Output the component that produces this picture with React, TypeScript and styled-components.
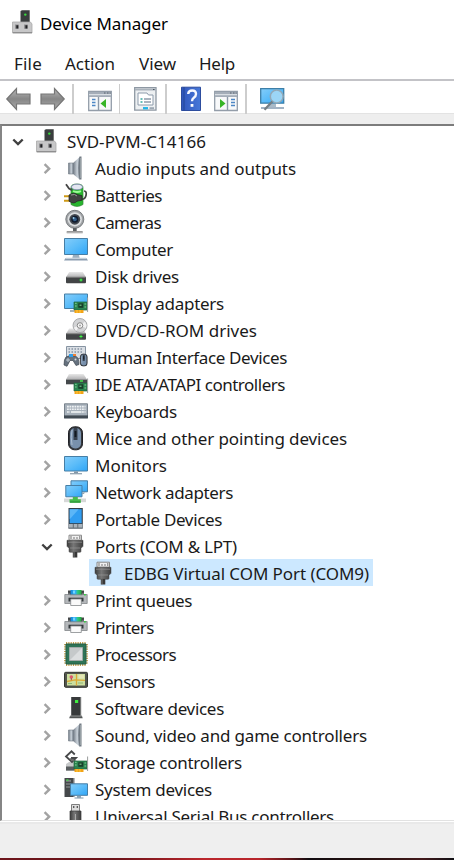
import React, { useLayoutEffect, useRef, useState } from "react";
import styled, { createGlobalStyle } from "styled-components";

const GlobalStyle = createGlobalStyle`
  * { box-sizing: border-box; }
  body { margin: 0; background: #fff; overflow: hidden; }
`;

const Window = styled.div`
  width: 454px;
  height: 860px;
  display: flex;
  flex-direction: column;
  overflow: hidden;
  background: #fff;
  color: #1a1a1a;
  font-family: "Noto Sans", "Open Sans", sans-serif;
  font-size: 17px;
`;

const TitleBar = styled.header`
  height: 45px;
  display: flex;
  align-items: flex-start;
  padding: 10px 0 0 10px;
  gap: 6px;
  color: #000;
`;

const MenuBar = styled.nav`
  height: 34px;
  display: flex;
  padding: 5px 0 0 14px;
`;

const MenuItem = styled.div<{ $w: number }>`
  width: ${(p) => p.$w}px;
`;

const Toolbar = styled.div`
  height: 35px;
  flex: none;
  display: flex;
  align-items: flex-start;
  padding: 6px 0 0 6px;
  border-top: 2px solid #c3c3c7;
  border-bottom: 1px solid #e3e3e3;
`;

const ToolButton = styled.div<{ $gap: number }>`
  width: 24px;
  height: 24px;
  margin-left: ${(p) => p.$gap}px;
`;

const Separator = styled.div<{ $gap: number }>`
  width: 1.5px;
  height: 30px;
  margin: -3px 0 0 ${(p) => p.$gap}px;
  background: #cdcdcd;
`;

const Band = styled.div`
  height: 10px;
  flex: none;
  background: #eee;
`;

const Tree = styled.main`
  height: 697px;
  flex: none;
  overflow: hidden;
  padding-top: 1px;
  border-top: 2px solid #7c7c7c;
  border-left: 2px solid #858585;
  border-bottom: 1px solid #e2e2e2;
`;

const Row = styled.div<{ $level: number }>`
  height: 27px;
  display: flex;
  padding-left: ${(p) => [7, 36, 87][p.$level]}px;
`;

const Content = styled.div<{ $selected?: boolean; $level: number }>`
  height: 27px;
  display: flex;
  gap: ${(p) => [9, 7, 8][p.$level]}px;
  padding: 0 ${(p) => (p.$selected ? 4 : 0)}px 0 ${(p) => (p.$selected ? 3 : 0)}px;
  background: ${(p) => (p.$selected ? "#cce8ff" : "transparent")};
`;

const Twisty = styled.svg<{ $level: number }>`
  width: 18px;
  height: 27px;
  margin-right: ${(p) => (p.$level ? 8 : 7)}px;
  fill: none;
`;

const Icon = styled.svg`
  display: block;
  flex: none;
  width: 24px;
  height: 24px;
  overflow: visible;
`;

const IconSlot = styled.div`
  padding-top: 2px;
  height: 27px;
`;

const Text = styled.span`
  display: block;
  white-space: pre;
  line-height: 27px;
  height: 27px;
`;

const RowText = styled.div`
  padding-top: 1px;
`;

const Status = styled.footer`
  height: 37px;
  flex: none;
  background: #efefef;
  border-top: 1px solid #fff;
  box-shadow: inset 0 2px #e9e9e9;
`;

const Desktop = styled.div`
  height: 2px;
  flex: none;
  background: linear-gradient(90deg, #6d151b, #6a1218 25%, #bb262c 45%, #b8252b 57%, #5d1519 64%, #120c10 68%, #24100f 80%, #43191b 93%, #111015);
`;

function Label({ text, width }: { text: string; width: number }) {
  const ref = useRef<HTMLSpanElement>(null);
  const [spacing, setSpacing] = useState(0);
  useLayoutEffect(() => {
    const range = document.createRange();
    range.selectNodeContents(ref.current!);
    const natural = range.getBoundingClientRect().width - spacing * text.length;
    setSpacing((width - natural) / text.length);
  }, [text, width]);
  return (
    <Text ref={ref} style={{ letterSpacing: `${spacing}px` }}>
      {text}
    </Text>
  );
}

const Defs = () => (
  <svg width="0" height="0" style={{ position: "absolute" }}>
    <defs>
      <linearGradient id="screen" x1="0" y1="0" x2="1" y2="1">
        <stop offset="0" stopColor="#84cdfa" />
        <stop offset=".5" stopColor="#5bbcf9" />
        <stop offset="1" stopColor="#2fa5f7" />
      </linearGradient>
      <linearGradient id="steel" x1="0" x2="1">
        <stop offset="0" stopColor="#6d7681" />
        <stop offset=".6" stopColor="#c9d1d9" />
        <stop offset="1" stopColor="#929ca7" />
      </linearGradient>
      <linearGradient id="silver" x1="0" y1="0" x2="0" y2="1">
        <stop offset="0" stopColor="#e8e8e8" />
        <stop offset="1" stopColor="#b0b0b2" />
      </linearGradient>
      <linearGradient id="dark" x1="0" y1="0" x2="1" y2="0">
        <stop offset="0" stopColor="#3c3c3c" />
        <stop offset=".4" stopColor="#777" />
        <stop offset="1" stopColor="#3d3d3d" />
      </linearGradient>
      <linearGradient id="arrow" x1="0" y1="0" x2="0" y2="1">
        <stop offset="0" stopColor="#b8b8b8" />
        <stop offset=".5" stopColor="#868686" />
        <stop offset="1" stopColor="#adadad" />
      </linearGradient>
      <linearGradient id="help" x1="0" x2="1">
        <stop offset="0" stopColor="#3156bd" />
        <stop offset="1" stopColor="#4778d8" />
      </linearGradient>
      <linearGradient id="rainbow">
        <stop offset="0" stopColor="#1687d9" />
        <stop offset=".45" stopColor="#35aef5" />
        <stop offset=".65" stopColor="#2cc983" />
        <stop offset="1" stopColor="#2aa83c" />
      </linearGradient>
    </defs>
  </svg>
);

const Card = () => (
  <g>
    <path d="M10 11h13v8H10z" fill="#2b8350" stroke="#1d643c" strokeWidth=".7" />
    <path d="M23.6 6.5V21" stroke="#9a9c9c" strokeWidth="1" />
    <path d="M14.3 12.3h5v4.5h-5z" fill="#173e2a" />
    <path d="M15.5 13.5h2v1.5h-2z" fill="#60aa74" />
    <path d="M11 12.3h1.7M11 15h1.7M20.5 13h1.7M20.5 16h1.7" stroke="#7fd294" />
    <path d="M10.5 19h9v3h-9z" fill="#f2a316" />
    <path d="M13 19v3M16 19v3" stroke="#ffd352" strokeWidth=".8" />
  </g>
);

const Tower = () => (
  <g>
    <path d="M10.5 1h8.5v11h-8.5z" fill="#393d3e" />
    <path d="M10.5 1l1.5 -1h8l-1 1z" fill="#686b6b" />
    <path d="M19 1l1 -1v12h-1z" fill="#777" />
    <circle cx="15.3" cy="4.6" r="1.2" fill="#38dc3d" />
    <path d="M2.5 12h18l1.5 2v9H2.5z" fill="#c7c7c8" stroke="#aaa" strokeWidth=".8" />
    <path d="M3 22.7h19" stroke="#858587" />
    <path d="M5 14.5h3.7v4.2H5zM14 14.5h3.7v4.2H14z" fill="#909092" />
    <path d="M6.3 15.2h2v3.3h-2zM15.4 15.2h2v3.3h-2z" fill="#202124" />
  </g>
);

const Drive = ({ y = 0 }: { y?: number }) => (
  <g transform={`translate(0 ${y})`}>
    <path d="M5.2 7h13.6l3.2 5.3H2z" fill="url(#silver)" />
    <path d="M2 12h20v5.2q0 1-1 1H3q-1 0-1-1z" fill="#424446" />
    <path d="M2.3 12.2h19.4" stroke="#888" />
    <path d="M17 13v4M15 15h4" stroke="#2bae3c" strokeWidth="1" />
    <path d="M16.2 14.2h1.6v1.6h-1.6z" fill="#4dff4d" />
  </g>
);

const Plug = () => (
  <g>
    <path d="M5 1.2h12.5v5H5z" fill="#f0f0f0" stroke="#898989" />
    <path d="M7 2v3M10 3v2M13 3v2M15.8 2v3" stroke="#777" strokeWidth="1" />
    <path d="M3 6.3h16v6l-2 2v3q0 1-1 1H6q-1 0-1-1v-3l-2-2z" fill="url(#dark)" stroke="#444" strokeWidth=".5" />
    <path d="M4 8.2h14M6 14h10" stroke="#929292" strokeWidth=".8" />
    <path d="M8.8 18h4.5v5.5H8.8z" fill="#383838" />
    <path d="M10 18v5" stroke="#777" />
  </g>
);

const Speaker = () => (
  <g>
    <path d="M4.5 7H9v11H4.5z" fill="url(#steel)" stroke="#747d86" strokeWidth=".6" />
    <path d="M9 7L16 .7v23L9 18z" fill="url(#steel)" />
    <path d="M15.5.5h2v23h-2q-2.5-11 0-23z" fill="#727b84" />
    <path d="M16.6 2v20" stroke="#a6adb3" strokeWidth=".8" />
  </g>
);

const Printer = () => (
  <g>
    <path d="M4 2.5h16v8H4z" fill="#444748" />
    <path d="M6.5 2h11v5h-11z" fill="url(#rainbow)" />
    <path d="M9 2.5h2v3H9z" fill="#72d6ff" />
    <path d="M.8 6.5h4V4.8l1 2h12.4l1-2v1.7h4V15.5H.8z" fill="#b4b7ba" stroke="#777b7e" strokeWidth=".7" />
    <path d="M4.5 9.7h15v3.8h-15z" fill="#353a3e" />
    <path d="M6.7 11h10.6v6.5H6.7z" fill="#fafafa" stroke="#85898c" strokeWidth=".8" />
    <path d="M20 6.8h1.8" stroke="#38cf45" strokeWidth="1.5" />
  </g>
);

const MousePath = () => (
  <g>
    <rect x="4.5" y=".8" width="14" height="23" rx="6" fill="#35383d" stroke="#202126" />
    <rect x="6" y="2" width="11" height="20.5" rx="5" fill="#7890ac" />
    <path d="M8 4q-1.6 7 0 15" stroke="#adbed1" fill="none" />
    <path d="M9.5 2h4v12h-4z" fill="#36404e" />
    <path d="M11.5 5v6" stroke="#111820" strokeWidth="1.8" />
  </g>
);

const icons: Record<string, React.ReactNode> = {
  root: <Tower />,
  audio: <Speaker />,
  battery: (
    <g>
      <path d="M7 4.5q0-3.5 6-3.5t6 3.5v17q-6 3.8-12 0z" fill="#27b52d" stroke="#338438" strokeWidth=".7" />
      <ellipse cx="13" cy="4" rx="5.5" ry="2.8" fill="#e4e7f1" stroke="#8687b9" strokeWidth=".8" />
      <path d="M9 8.2q4 1.7 8 0" stroke="#9afb94" strokeWidth="2" fill="none" />
      <path d="M2 1.3l3 4.3 3 1.5" stroke="#444" strokeWidth="1.8" fill="none" />
      <path d="M17 16q4 1 5-3.5t-2-4.5" stroke="#404340" strokeWidth="1.7" fill="none" />
      <path d="M0 13.3h6M0 17.7h6" stroke="#d09a17" strokeWidth="2" />
      <path d="M5 12q5-3.3 8-.5l5 1.2v4.5l-5 1q-3 3.5-8 0z" fill="#414342" stroke="#222" strokeWidth=".7" />
      <path d="M7 12q4-1.5 6 1" stroke="#999" fill="none" />
    </g>
  ),
  camera: (
    <g>
      <circle cx="10.8" cy="9.3" r="9" fill="#a0a3a6" stroke="#7a7e81" />
      <circle cx="10.8" cy="9.3" r="7.1" fill="#dadddf" />
      <circle cx="10.8" cy="9.3" r="5.4" fill="#43484f" />
      <circle cx="10.8" cy="9.3" r="3.5" fill="#101b2e" />
      <circle cx="10.8" cy="9.3" r="2" fill="#315c87" />
      <circle cx="9.5" cy="8" r="1" fill="#9ccce7" />
      <path d="M9 18h3.7v3H9z" fill="#5c6063" />
      <path d="M2.7 22h16" stroke="#777" strokeWidth="1.5" />
      <path d="M2.7 23h16" stroke="#c8c8c8" />
    </g>
  ),
  computer: (
    <g>
      <path d="M.5 1.5h23v16H.5z" fill="url(#screen)" stroke="#467ea5" />
      <path d="M9 18h6l.7 3H8.3z" fill="#9cafbf" />
      <path d="M1.5 21.2h21l1.5 2.3H0z" fill="#8a9caf" />
      <path d="M2 21.2h20" stroke="#d2dce5" />
    </g>
  ),
  monitor: (
    <g>
      <path d="M.5 3.5h23v14.5H.5z" fill="url(#screen)" stroke="#467ea5" />
      <path d="M10 18.5h4v2h-4z" fill="#8296a7" />
      <path d="M6 20.7h12" stroke="#93a3b0" strokeWidth="1.3" />
    </g>
  ),
  disk: <Drive y={1} />,
  display: (
    <g>
      <path d="M.5 3h23v14.5H.5z" fill="url(#screen)" stroke="#467ea5" />
      <path d="M6 20h6" stroke="#7e929d" strokeWidth="1.4" />
      <Card />
    </g>
  ),
  dvd: (
    <g>
      <Drive y={3.5} />
      <circle cx="16" cy="7.5" r="7" fill="#d2d3d5" stroke="#9a9c9e" strokeWidth=".8" />
      <path d="M16 7.5l5-4A7 7 0 0 1 22 10zM16 7.5l-6 2A7 7 0 0 0 12 13z" fill="#f2f2f3" />
      <circle cx="16" cy="7.5" r="2.8" fill="#f6f6f6" stroke="#888" />
      <circle cx="16" cy="7.5" r="1.1" fill="#aaa" />
    </g>
  ),
  hid: (
    <g>
      <path d="M2.5 1.5h19v12h-19z" fill="#d9dee4" stroke="#8794a2" />
      <path d="M4.5 4h15M4.5 7h15" stroke="#8794a2" strokeWidth="1.5" strokeDasharray="1.5 1.5" />
      <path d="M2 12q5-3 10-.5 3 1 3 8l-3 1-3-5H6l-3 5.8-3-1.3q0-6 2-8z" fill="#65717e" stroke="#404951" strokeWidth=".7" />
      <path d="M5 9h4v3H5z" fill="#319ee9" />
      <path d="M9 9h3v2H9z" fill="#ef8135" />
      <path d="M2 15h4M4 13v4" stroke="#c0c9d0" />
      <circle cx="11.5" cy="14.5" r="1" fill="#d2d8dd" />
      <g transform="translate(14 8.5) scale(.5 .53)"><MousePath /></g>
    </g>
  ),
  ide: (
    <g>
      <path d="M5 2h14.5l3.5 5.5H2z" fill="url(#silver)" />
      <path d="M2 7.5h21v4.8H2z" fill="#44484b" />
      <Card />
      <path d="M16 9h3" stroke="#44e54d" strokeWidth="1.5" />
    </g>
  ),
  keyboard: (
    <g>
      <path d="M.5 4.8h23v14H.5z" fill="#a7b1bb" stroke="#78828c" />
      <path d="M3 7.6h18.5M3 10.3h18.5M3 13h3M18 13h3.5" stroke="#eff2f4" strokeWidth="1.6" strokeDasharray="1.8 .7" />
      <path d="M7 13h10.5" stroke="#f1f4f6" strokeWidth="1.6" />
      <path d="M0 16.4h24v3H0z" fill="#414b54" />
    </g>
  ),
  mouse: <MousePath />,
  network: (
    <g>
      <path d="M7 .8h16.5v11H7z" fill="url(#screen)" stroke="#467ea5" />
      <path d="M1.8 5.5H18v11.3H1.8z" fill="url(#screen)" stroke="#467ea5" />
      <path d="M20 12v1.5h-2" stroke="#91a3b0" fill="none" />
      <path d="M0 18.5h22v3.7H0z" fill="#d7d8d8" />
      <path d="M8.8 17h5v2.2h3v3.5H5.5v-3.5h3.3z" fill="#47bb4c" />
      <path d="M6 22h10.5" stroke="#228d31" />
    </g>
  ),
  portable: (
    <g>
      <path d="M4.5 1h14.3v20.5H4.5z" fill="#353f49" />
      <path d="M5.7 2.2h12v14h-12z" fill="#309df1" />
      <path d="M5.7 2.2h9l-9 10z" fill="#5bb6f7" />
      <path d="M4.8 17h13.7v4H4.8z" fill="#a9b2ba" />
      <path d="M9.3 17v4M13.8 17v4" stroke="#626c74" />
      <path d="M4.5 21h14" stroke="#67727b" />
    </g>
  ),
  plug: <Plug />,
  printer: <Printer />,
  cpu: (
    <g>
      <path d="M2 1h20M2 23h20M1 2v20M23 2v20" stroke="#c19a4b" strokeWidth="1.8" strokeDasharray="1.2 1.1" />
      <path d="M2 2h20v20H2z" fill="#2e7457" stroke="#225e46" />
      <path d="M5.5 5.5h13v13h-13z" fill="#c5c9ca" stroke="#a1aaa8" />
      <path d="M6 18l12-12v12z" fill="#dbdedf" />
    </g>
  ),
  sensor: (
    <g>
      <rect x=".5" y="3.3" width="23" height="15" rx="1.2" fill="#53564e" stroke="#33362f" />
      <path d="M3 5h18v11.5H3z" fill="#cddf9f" />
      <path d="M3 12.5l8-1.7 10 .5M12.5 5v11.5" stroke="#dba936" strokeWidth="1.3" fill="none" />
      <path d="M14.5 5.7H20v3.8h-5.5z" fill="#e4e6b6" />
      <circle cx="7.3" cy="8" r="1.8" fill="#df596c" />
      <path d="M7.3 9v2.2" stroke="#a94652" />
      <path d="M4 14.5h4M14 14h5" stroke="#8eb77a" />
    </g>
  ),
  software: (
    <g>
      <path d="M7.2 1H17v19H7.2z" fill="#373a3b" />
      <path d="M16 1h1.2v19H16z" fill="#727575" />
      <path d="M11 4h3.2v3H11z" fill="#40ed40" />
      <path d="M6 20h12l.7 2.3H5.2z" fill="#515454" />
      <path d="M6 20h12" stroke="#909292" />
    </g>
  ),
  storage: (
    <g>
      <path d="M2 14l3-2h9v9H2z" fill="#c7c9ca" />
      <path d="M2 16.5h11v4H2z" fill="#595d5f" />
      <path d="M10.8 4.5L7.5 1.3 2 6.5 8 12l4-4H7" fill="none" stroke="#47494a" strokeWidth="1.8" />
      <path d="M6 8.8l8 3.7" stroke="#666" strokeWidth="1.5" />
      <Card />
    </g>
  ),
  system: (
    <g>
      <path d="M.5 1h9.8v19H.5z" fill="#45484a" />
      <path d="M9.3 1h1v19h-1z" fill="#989b9c" />
      <path d="M2 2.8h5v2H2z" fill="#7d8182" />
      <path d="M2.4 2.3h2v1.5h-2z" fill="#44dc46" />
      <path d="M2 7h5M2 10h4" stroke="#969999" />
      <path d="M6.5 6.8h17v11.5h-17z" fill="url(#screen)" stroke="#467ea5" />
      <path d="M13 19h4v2h-4z" fill="#8da4b4" />
      <path d="M10.5 21h9" stroke="#91a7b7" strokeWidth="1.2" />
    </g>
  ),
  usb: (
    <g>
      <path d="M7.5.5h8v7h-8z" fill="#ddd" stroke="#7e7e7e" />
      <path d="M9.7 2v2M13.3 2v2" stroke="#555" strokeWidth="1.3" />
      <path d="M6 7h11v17H6z" fill="url(#dark)" stroke="#3a3a3a" strokeWidth=".7" />
      <path d="M11.5 10v6" stroke="#aaa" />
    </g>
  ),
};

type Node = { icon: string; text: string; width: number; level?: number; open?: boolean; selected?: boolean };

const nodes: Node[] = [
  { icon: "root", text: "SVD-PVM-C14166", width: 139, level: 0, open: true },
  { icon: "audio", text: "Audio inputs and outputs", width: 201 },
  { icon: "battery", text: "Batteries", width: 67 },
  { icon: "camera", text: "Cameras", width: 66 },
  { icon: "computer", text: "Computer", width: 78 },
  { icon: "disk", text: "Disk drives", width: 84 },
  { icon: "display", text: "Display adapters", width: 129 },
  { icon: "dvd", text: "DVD/CD-ROM drives", width: 162 },
  { icon: "hid", text: "Human Interface Devices", width: 192 },
  { icon: "ide", text: "IDE ATA/ATAPI controllers", width: 190 },
  { icon: "keyboard", text: "Keyboards", width: 82 },
  { icon: "mouse", text: "Mice and other pointing devices", width: 252 },
  { icon: "monitor", text: "Monitors", width: 72 },
  { icon: "network", text: "Network adapters", width: 138 },
  { icon: "portable", text: "Portable Devices", width: 127 },
  { icon: "plug", text: "Ports (COM & LPT)", width: 142, open: true },
  { icon: "plug", text: "EDBG Virtual COM Port (COM9)", width: 245, level: 2, selected: true },
  { icon: "printer", text: "Print queues", width: 97 },
  { icon: "printer", text: "Printers", width: 59 },
  { icon: "cpu", text: "Processors", width: 81 },
  { icon: "sensor", text: "Sensors", width: 60 },
  { icon: "software", text: "Software devices", width: 129 },
  { icon: "audio", text: "Sound, video and game controllers", width: 272 },
  { icon: "storage", text: "Storage controllers", width: 147 },
  { icon: "system", text: "System devices", width: 117 },
  { icon: "usb", text: "Universal Serial Bus controllers", width: 239 },
];

function TreeRow({ node }: { node: Node }) {
  const level = node.level ?? 1;
  return (
    <Row $level={level}>
      {level < 2 && (
        <Twisty $level={level} viewBox="0 0 18 27">
          {node.open ? (
            <path d="M4.3 12.5L9 17l4.7-4.5" stroke="#404040" strokeWidth="2.4" />
          ) : (
            <path d="M6.6 10.2l4.6 4.5-4.6 4.5" stroke="#a3a3a3" strokeWidth="2.4" />
          )}
        </Twisty>
      )}
      <Content $level={level} $selected={node.selected}>
        <IconSlot>
          <Icon viewBox="0 0 24 24">{icons[node.icon]}</Icon>
        </IconSlot>
        <RowText>
          <Label text={node.text} width={node.width} />
        </RowText>
      </Content>
    </Row>
  );
}

const Arrow = () => (
  <path d="M.8 12L10.5 1.5V7H24v10H10.5v5.5z" fill="url(#arrow)" stroke="#767676" strokeWidth="1.2" />
);

const PanelWindow = () => (
  <g>
    <path d="M.7 4.5h22.6v19H.7z" fill="#f8f9fa" stroke="#939da9" strokeWidth="1.3" />
    <path d="M1 5h22v5H1z" fill="#a4adb8" />
    <path d="M1 7.7h22" stroke="#e5e9ed" />
    <path d="M16 6h1.5M19 6h1.5M21.7 6h1" stroke="#58636f" />
  </g>
);

export default function App() {
  return (
    <>
      <GlobalStyle />
      <Defs />
      <Window>
        <TitleBar>
          <Icon viewBox="0 0 24 24"><Tower /></Icon>
          <Label text="Device Manager" width={128} />
        </TitleBar>
        <MenuBar>
          <MenuItem $w={51}><Label text="File" width={28} /></MenuItem>
          <MenuItem $w={74}><Label text="Action" width={50} /></MenuItem>
          <MenuItem $w={60}><Label text="View" width={37} /></MenuItem>
          <MenuItem $w={50}><Label text="Help" width={36} /></MenuItem>
        </MenuBar>
        <Toolbar>
          <ToolButton $gap={0}><Icon viewBox="0 0 24 24"><Arrow /></Icon></ToolButton>
          <ToolButton $gap={11}><Icon viewBox="0 0 24 24"><g transform="translate(24 0) scale(-1 1)"><Arrow /></g></Icon></ToolButton>
          <Separator $gap={7} />
          <ToolButton $gap={14}>
            <Icon viewBox="0 0 24 24">
              <PanelWindow />
              <path d="M10.5 10v13" stroke="#8b98a8" strokeWidth="1.4" />
              <path d="M4 12.5h3.5M4 15.5h3.5M4 18.5h3.5" stroke="#4d87c5" strokeWidth="1.4" />
              <path d="M18 12v9l-5.5-4.5z" fill="#37b526" />
            </Icon>
          </ToolButton>
          <Separator $gap={7} />
          <ToolButton $gap={13.5}>
            <Icon viewBox="0 0 24 24">
              <path d="M.7.7H22v22.5H.7z" fill="#edf0f2" stroke="#8e98a3" strokeWidth="1.3" />
              <path d="M1 2.5h21" stroke="#aab3bc" strokeWidth="2" />
              <path d="M19 2.5h1.5" stroke="#49545f" />
              <path d="M4 6h9l1.5 2H19v10H4z" fill="#fff" stroke="#8d9bab" />
              <path d="M6.5 12h2M6.5 15h2" stroke="#36a8a0" strokeWidth="1.5" />
              <path d="M10 12h7M10 15h7" stroke="#8e9aab" strokeWidth="1.3" />
              <path d="M9 21.2h5" stroke="#20b4e8" strokeWidth="2.3" />
              <path d="M15.5 21.2h4.5" stroke="#9da9b4" strokeWidth="2" />
            </Icon>
          </ToolButton>
          <Separator $gap={7.5} />
          <ToolButton $gap={14.5}>
            <Icon viewBox="0 0 24 24">
              <path d="M.5.2h19V23.5H.5z" fill="url(#help)" stroke="#2d4d9e" />
              <path d="M3 0v23.5" stroke="#234696" strokeWidth="1" />
              <path d="M7.2 7q.2-3.5 4-3.5T15 7q0 2.2-2.2 3.7-1.8 1.3-1.8 3.5" fill="none" stroke="#f5f8ff" strokeWidth="2.4" />
              <path d="M9.6 17h2.8v2.8H9.6z" fill="#fff" />
            </Icon>
          </ToolButton>
          <ToolButton $gap={9}>
            <Icon viewBox="0 0 24 24">
              <PanelWindow />
              <path d="M13.5 10v13" stroke="#8b98a8" strokeWidth="1.4" />
              <path d="M17 12.5h4M17 15.5h4M17 18.5h4" stroke="#4d87c5" strokeWidth="1.4" />
              <path d="M6 12v9l5.5-4.5z" fill="#37b526" />
            </Icon>
          </ToolButton>
          <Separator $gap={7} />
          <ToolButton $gap={13.5}>
            <Icon viewBox="0 0 24 24">
              <path d="M.7 1.7h23v14.5H.7z" fill="url(#screen)" stroke="#3d7fa8" strokeWidth="1.3" />
              <path d="M9 17h7v3H9z" fill="#a9bac8" />
              <path d="M1 21h23" stroke="#8ba1b6" strokeWidth="1.6" />
              <circle cx="16.7" cy="9.5" r="6.4" fill="#9bd5f6" stroke="#92a9b8" strokeWidth="1.5" />
              <path d="M12.3 14.5L4.5 22.7" stroke="#747e85" strokeWidth="2.3" />
            </Icon>
          </ToolButton>
        </Toolbar>
        <Band />
        <Tree>
          {nodes.map((node) => (
            <TreeRow key={node.text} node={node} />
          ))}
        </Tree>
        <Status />
        <Desktop />
      </Window>
    </>
  );
}
